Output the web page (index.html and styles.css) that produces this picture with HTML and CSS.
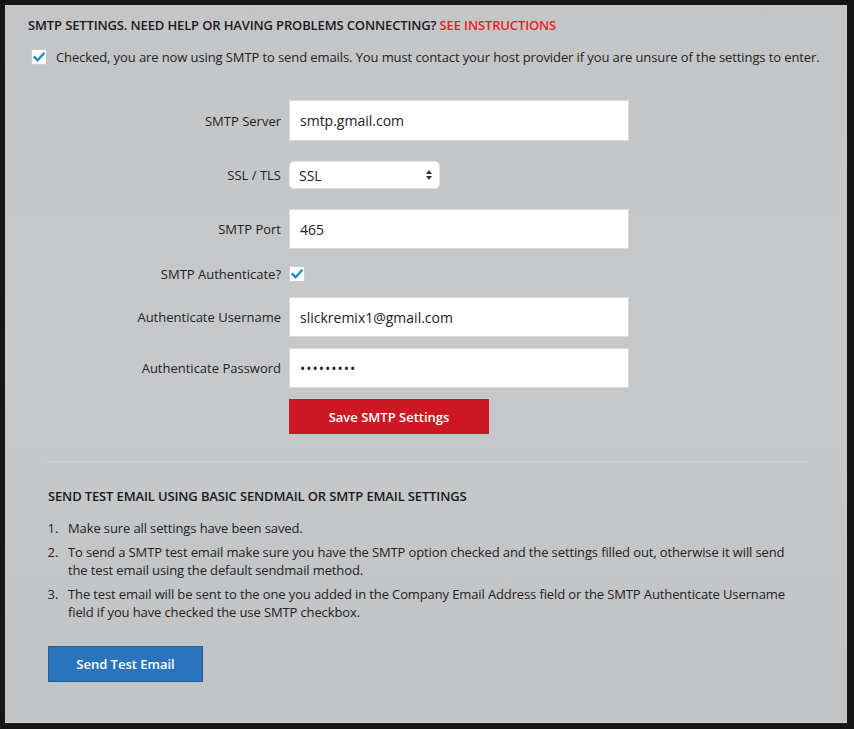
FILE: index.html
```html
<!DOCTYPE html>
<html>
<head>
<meta charset="utf-8">
<link rel="stylesheet" href="styles.css">
</head>
<body>
<div class="panel">
  <h3 class="title">SMTP Settings. Need help or having problems connecting? <a class="red" href="#">See Instructions</a></h3>
  <label class="use-smtp">
    <span class="check"><svg viewBox="0 0 16 16" width="16" height="16"><path d="M3.6 8.2 L6.6 11.2 L12.6 4.6" fill="none" stroke="#1e8cbe" stroke-width="2.4" stroke-linecap="square"/></svg></span>
    <span>Checked, you are now using SMTP to send emails. You must contact your host provider if you are unsure of the settings to enter.</span>
  </label>

  <div class="form">
    <div class="row r-server">
      <span class="lbl">SMTP Server</span>
      <input class="field" type="text" value="smtp.gmail.com">
    </div>
    <div class="row r-ssl">
      <span class="lbl">SSL / TLS</span>
      <div class="select">
        <span>SSL</span>
        <svg class="arrows" viewBox="0 0 8 12" width="8" height="12"><path d="M4 1 L7 5 L1 5 Z M4 11 L7 7 L1 7 Z" fill="#333"/></svg>
      </div>
    </div>
    <div class="row r-port">
      <span class="lbl">SMTP Port</span>
      <input class="field" type="text" value="465">
    </div>
    <div class="row r-auth">
      <span class="lbl">SMTP Authenticate?</span>
      <span class="check"><svg viewBox="0 0 16 16" width="16" height="16"><path d="M3.6 8.2 L6.6 11.2 L12.6 4.6" fill="none" stroke="#1e8cbe" stroke-width="2.4" stroke-linecap="square"/></svg></span>
    </div>
    <div class="row r-user">
      <span class="lbl">Authenticate Username</span>
      <input class="field" type="text" value="slickremix1@gmail.com">
    </div>
    <div class="row r-pass">
      <span class="lbl">Authenticate Password</span>
      <input class="field pass" type="password" value="abcdefghi">
    </div>
    <div class="row r-save">
      <span class="lbl"></span>
      <button class="btn btn-red">Save SMTP Settings</button>
    </div>
  </div>

  <div class="test">
    <h3 class="title">Send test email using basic sendmail or SMTP email settings</h3>
    <ol class="steps">
      <li>Make sure all settings have been saved.</li>
      <li>To send a SMTP test email make sure you have the SMTP option checked and the settings filled out, otherwise it will send the test email using the default sendmail method.</li>
      <li>The test email will be sent to the one you added in the Company Email Address field or the SMTP Authenticate Username field if you have checked the use SMTP checkbox.</li>
    </ol>
    <button class="btn btn-blue">Send Test Email</button>
  </div>
</div>
</body>
</html>
```

FILE: styles.css
```css
html, body {
  margin: 0;
  padding: 0;
}
body {
  background: #161616;
  font-family: "Open Sans", "Liberation Sans", sans-serif;
  font-size: 13px;
  color: #222;
  height: 729px;
  overflow: hidden;
}
.panel {
  margin: 5px 7px 0 5px;
  height: 718px;
  box-sizing: border-box;
  background: linear-gradient(180deg, #c4c5c7 0%, #c7c8ca 50%, #c2c3c5 100%);
  border-bottom: 1px solid #d4d5d7;
  padding: 11px 0 0 23px;
}
.title {
  margin: 0;
  font-size: 13px;
  font-weight: 600;
  line-height: 18px;
  text-transform: uppercase;
  color: #1a1a1a;
  letter-spacing: -0.14px;
}
.red {
  color: #ee1c1c;
  text-decoration: none;
}
.use-smtp {
  display: flex;
  align-items: center;
  gap: 9px;
  margin: 14px 0 0 3px;
  line-height: 18px;
  letter-spacing: -0.1px;
}
.check {
  display: inline-flex;
  width: 16px;
  height: 16px;
  box-sizing: border-box;
  background: #fff;
  border: 1px solid #c8ccd0;
  align-items: center;
  justify-content: center;
  flex: none;
}
.check svg {
  display: block;
  margin: -1px;
}
.form {
  display: flex;
  flex-direction: column;
  margin-top: 34px;
}
.row {
  display: flex;
  align-items: center;
  gap: 8px;
}
.lbl {
  width: 253px;
  text-align: right;
  flex: none;
  line-height: 18px;
}
.field {
  width: 340px;
  height: 41px;
  box-sizing: border-box;
  border: 1px solid #dcdcdc;
  background: #fff;
  padding: 0 10px;
  font-family: "Open Sans", "Liberation Sans", sans-serif;
  font-size: 14px;
  color: #222;
  outline: none;
  margin: 0;
}
.pass {
  letter-spacing: 1px;
}
.select {
  width: 151px;
  height: 28px;
  box-sizing: border-box;
  background: #fff;
  border: 1px solid #e2e2e2;
  border-radius: 5px;
  display: flex;
  align-items: center;
  padding: 0 9px;
  font-size: 14px;
  position: relative;
}
.arrows {
  position: absolute;
  right: 6px;
  top: 7px;
}
.r-ssl { margin-top: 20px; }
.r-port { margin-top: 20px; }
.r-port .field { height: 40px; }
.r-auth { margin-top: 16px; }
.r-user { margin-top: 14px; }
.r-user .field, .r-pass .field { height: 40px; }
.r-pass { margin-top: 11px; }
.r-save { margin-top: 11px; }
.btn {
  font-family: "Open Sans", "Liberation Sans", sans-serif;
  font-size: 13px;
  font-weight: 600;
  color: #fff;
  border: 0;
  cursor: pointer;
  margin: 0;
}
.btn-red {
  width: 200px;
  height: 35px;
  background: #cd1823;
}
.test {
  margin: 27px 40px 0 19px;
  padding: 25px 0 0 1px;
  border-top: 1px solid #d0d1d3;
}
.steps {
  margin: 14px 0 0 0;
  padding: 0 0 0 20px;
  line-height: 18px;
  letter-spacing: -0.12px;
}
.steps li {
  margin-bottom: 6px;
  padding-left: 0;
}
.steps li::marker {
  content: counter(list-item) ".   ";
}
.btn-blue {
  margin-top: 19px;
  width: 155px;
  height: 36px;
  background: #2a74bc;
  border: 1px solid #1e5c97;
  box-sizing: border-box;
}
```
